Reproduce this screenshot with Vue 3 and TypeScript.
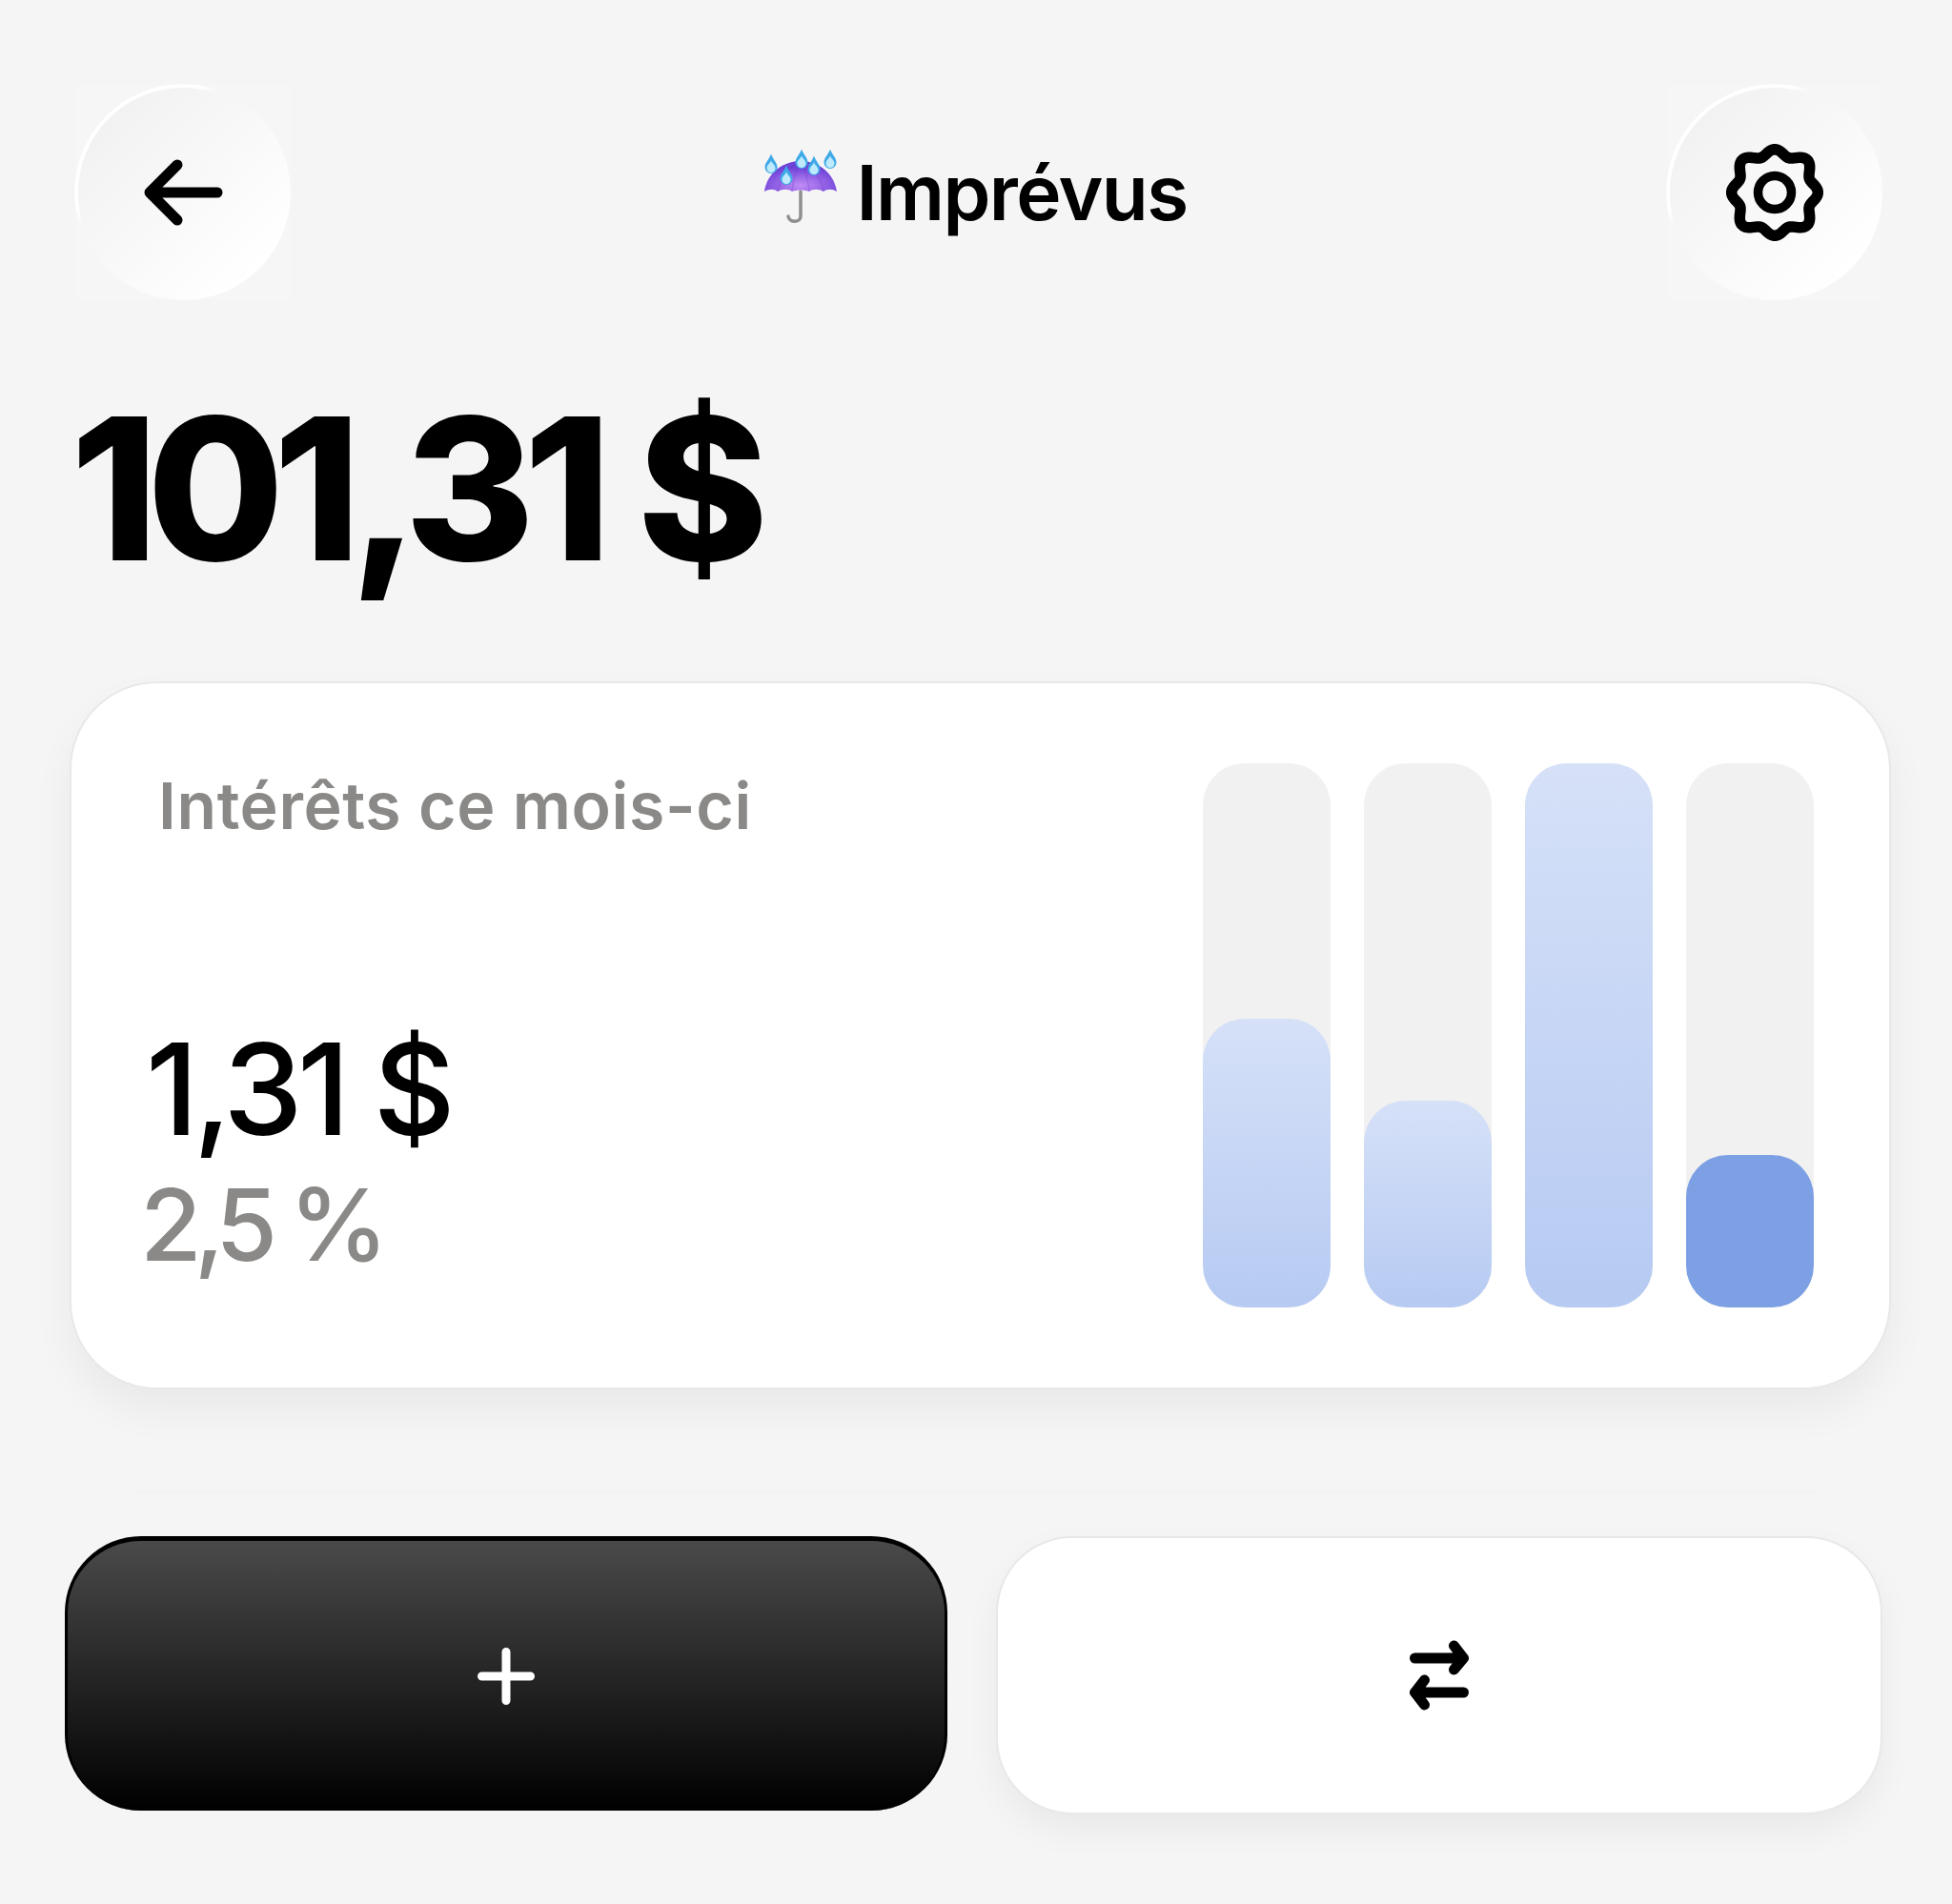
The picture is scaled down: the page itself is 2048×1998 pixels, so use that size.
<script setup lang="ts">
const bars = [
  { fill: 53, active: false },
  { fill: 38, active: false },
  { fill: 100, active: false },
  { fill: 28, active: true },
];

const drops = [
  { x: 7, y: 19.5 },
  { x: 39, y: 14.5 },
  { x: 52, y: 21.5 },
  { x: 69, y: 14.5 },
  { x: 23, y: 31.5 },
];

// wavy outline of the settings icon, eight lobes
const gearPath = (() => {
  const pts: string[] = [];
  for (let i = 0; i < 240; i++) {
    const t = (i / 240) * Math.PI * 2;
    const r = 43 + 3.8 * Math.cos(8 * t) - 1.5 * Math.cos(4 * t);
    pts.push(`${(60 + r * Math.sin(t)).toFixed(2)} ${(60 - r * Math.cos(t)).toFixed(2)}`);
  }
  return `M${pts.join('L')}Z`;
})();
</script>

<template>
  <div class="page">
    <header class="top">
      <button class="round">
        <span class="disc">
          <svg width="100" height="80" viewBox="0 0 100 80" fill="none" stroke="#000" stroke-width="11" stroke-linecap="round" stroke-linejoin="round">
            <path d="M86 40H15M44 11 15 40l29 29" />
          </svg>
        </span>
      </button>
      <h1 class="title">
        <svg class="umbrella" width="76" height="77" viewBox="0 0 76 77" fill="none">
          <defs>
            <radialGradient id="canopy" cx="0.5" cy="0.8" r="0.6">
              <stop offset="0" stop-color="#c08cf6" />
              <stop offset="1" stop-color="#6f42d8" />
            </radialGradient>
          </defs>
          <path d="M38 44v26c0 7-12 7-13 0" stroke="#8f8f8f" stroke-width="3.5" stroke-linecap="round" />
          <path d="M0 44C3 24 20 12 38 12s35 12 38 32c-5-3-10-3-14 0-5-3-11-3-15 0-5-2-13-2-18 0-4-3-10-3-15 0-4-3-9-3-14 0z" fill="url(#canopy)" />
          <path d="M38 12C24 20 16 32 14 44M38 12c14 8 22 20 24 32M38 12C33 22 30 34 29 43M38 12c5 10 8 22 9 31" stroke="#5a2fb8" stroke-opacity="0.2" stroke-width="1.500" />
          <g v-for="(d, i) in drops" :key="i" :transform="`translate(${d.x} ${d.y})`">
            <path d="M0-15C2-9 6.500-6 6.500-1a6.500 6.500 0 0 1-13 0C-6.500-6-2-9 0-15z" fill="#3fa9e8" />
            <path d="M0-8C1-5 4.500-3.500 4.500 0a4.500 4.500 0 0 1-9 0C-4.500-3.500-1-5 0-8z" fill="#bfeafd" />
          </g>
        </svg>
        <span>Imprévus</span>
      </h1>
      <button class="round">
        <span class="disc">
          <svg width="120" height="120" viewBox="0 0 120 120" fill="none" stroke="#000" stroke-width="11.500" stroke-linejoin="round">
            <path :d="gearPath" />
            <circle cx="60" cy="60" r="17.500" stroke-width="9.500" />
          </svg>
        </span>
      </button>
    </header>

    <div class="amount">101,31 $</div>

    <section class="card">
      <div class="info">
        <div class="label">Intérêts ce mois-ci</div>
        <div class="figures">
          <div class="value">1,31 $</div>
          <div class="pct">2,5 %</div>
        </div>
      </div>
      <div class="chart">
        <div v-for="(bar, i) in bars" :key="i" class="track">
          <div class="fill" :class="{ active: bar.active }" :style="{ height: bar.fill + '%' }"></div>
        </div>
      </div>
    </section>

    <div class="divider"></div>

    <div class="actions">
      <button class="action dark">
        <svg width="70" height="70" viewBox="0 0 70 70" fill="none" stroke="#fff" stroke-width="9" stroke-linecap="round">
          <path d="M35 9.500v51M9.500 35h51" />
        </svg>
      </button>
      <button class="action light">
        <svg width="72" height="84" viewBox="0 0 72 84" fill="none" stroke="#000" stroke-width="11" stroke-linecap="round" stroke-linejoin="round">
          <path d="M10.500 24h51M51.500 11l10 13-10 12M61.500 60h-51M20.500 47l-10 13 10 13" />
        </svg>
      </button>
    </div>
  </div>
</template>

<style scoped>
.page {
  width: 2048px;
  height: 1998px;
  box-sizing: border-box;
  overflow: hidden;
  padding-top: 89px;
  background: #f5f5f5;
  font-family: Inter, "Liberation Sans", sans-serif;
  color: #000;
}

.top {
  display: flex;
  align-items: center;
  justify-content: space-between;
  padding: 0 73px 0 79px;
}

.round {
  width: 226px;
  height: 226px;
  padding: 0;
  border: 0;
  background: #f6f6f6;
  outline: 0;
}

.disc {
  position: relative;
  display: flex;
  align-items: center;
  justify-content: center;
  width: 100%;
  height: 100%;
  border-radius: 50%;
  background: linear-gradient(135deg, #efefef, #ffffff 85%);
}

.disc::before {
  content: "";
  position: absolute;
  inset: -1px;
  border: 4px solid #fff;
  border-radius: 50%;
  -webkit-mask-image: conic-gradient(from 250deg, transparent 0, #000 12deg, #000 118deg, transparent 130deg);
  mask-image: conic-gradient(from 250deg, transparent 0, #000 12deg, #000 118deg, transparent 130deg);
}

.title {
  display: flex;
  align-items: center;
  gap: 20px;
  margin: 0 6px 0 0;
  font-size: 80px;
  font-weight: 600;
  letter-spacing: -1.6px;
  line-height: 90px;
}

.umbrella {
  margin-bottom: 14px;
}

.amount {
  margin: 77px 0 0 74px;
  font-size: 208px;
  font-weight: 800;
  line-height: 240px;
  letter-spacing: -11.5px;
  word-spacing: 5px;
}

.card {
  display: flex;
  justify-content: space-between;
  box-sizing: border-box;
  width: 1911px;
  height: 743px;
  margin: 83px 0 0 73px;
  padding: 84px 79px 84px 0;
  background: #fff;
  border: 2px solid #e8e8e8;
  border-radius: 92px;
  box-shadow: 0 22px 44px rgba(0, 0, 0, 0.05);
}

.info {
  display: flex;
  flex-direction: column;
  justify-content: space-between;
}

.label {
  margin: 6px 0 0 91px;
  font-size: 68px;
  font-weight: 600;
  line-height: 76px;
  letter-spacing: 0.6px;
  color: #8a8987;
}

.figures {
  margin-bottom: 27px;
}

.value {
  margin-left: 78px;
  font-size: 133px;
  font-weight: 500;
  line-height: 164px;
  letter-spacing: -5.5px;
}

.pct {
  margin-left: 72px;
  font-size: 105px;
  font-weight: 500;
  line-height: 120px;
  letter-spacing: -8px;
  color: #8a8987;
}

.chart {
  display: flex;
  gap: 35px;
}

.track {
  display: flex;
  align-items: flex-end;
  width: 134px;
  height: 571px;
  border-radius: 44px;
  background: #f1f1f1;
}

.fill {
  width: 100%;
  border-radius: 44px;
  background: linear-gradient(180deg, #d6e1f8, #b6caf2);
}

.fill.active {
  background: #7da0e4;
}

.divider {
  height: 2px;
  margin: 107px 140px 0;
  background: #f2f2f2;
}

.actions {
  display: flex;
  align-items: flex-start;
  gap: 51px;
  margin: 45px 0 0 68px;
}

.action {
  display: flex;
  align-items: center;
  justify-content: center;
  box-sizing: border-box;
  padding: 0;
  border-radius: 80px;
}

.dark {
  width: 926px;
  height: 288px;
  border: 3px solid #000;
  border-top-width: 5px;
  border-bottom-width: 0;
  background: linear-gradient(180deg, #4a4a4a, #000);
}

.light {
  width: 930px;
  height: 292px;
  border: 2px solid #e8e8e8;
  background: #fff;
  box-shadow: 0 16px 36px rgba(0, 0, 0, 0.05);
}
</style>

<style>
html,
body {
  background: #f5f5f5;
}
</style>
